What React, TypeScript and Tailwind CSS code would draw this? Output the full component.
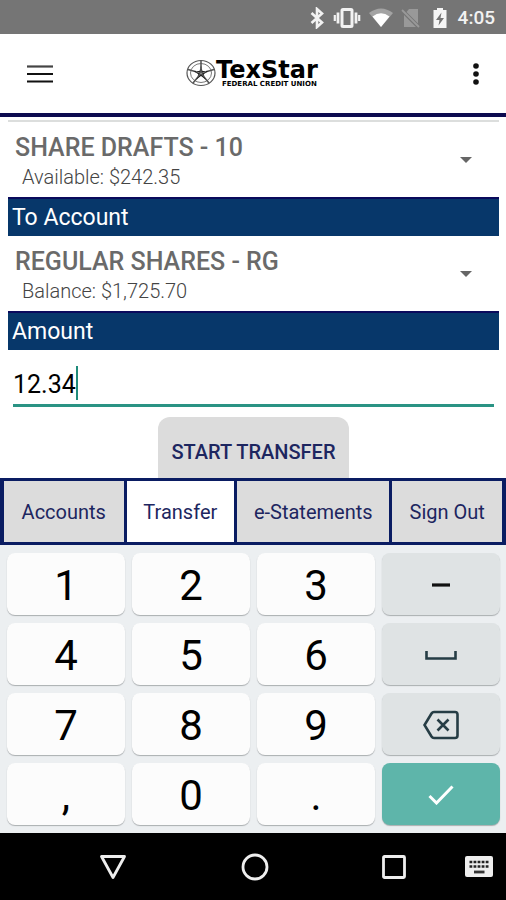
import { useState } from 'react'
import type { ReactNode } from 'react'
import { clsx } from 'clsx'

interface AccountPickerProps {
  id: string
  label: string
  name: string
  detail: string
}

const TABS = [
  { label: 'Accounts', className: 'grow-120' },
  { label: 'Transfer', className: 'grow-108' },
  { label: 'e-Statements', className: 'grow-153' },
  { label: 'Sign Out', className: 'grow-110' },
]

function StatusBar() {
  return (
    <div className="flex h-[34px] items-center justify-end bg-[#757575] pt-px pr-[11px] text-[#f2f2f2]">
      <svg viewBox="0 0 16 22" className="mr-2 h-[22px] w-4" fill="none" stroke="#f2f2f2" strokeWidth="2.6">
        <path d="M2.500 6l10.500 9.500-5 4.500V2l5 4.500L2.500 16" />
      </svg>
      <svg viewBox="0 0 28 22" className="mr-2 h-[22px] w-7" fill="none" stroke="#f2f2f2">
        <rect x="9" y="2.5" width="10" height="17" strokeWidth="3" rx="1" />
        <path d="M5 5.500v11M23 5.500v11" strokeWidth="2.800" />
        <path d="M1.800 8v6M26.200 8v6" strokeWidth="2.200" />
      </svg>
      <svg viewBox="0 0 24 20" className="mr-2 h-5 w-6">
        <path d="M0 5Q12 -4 24 5L12 19z" fill="#a3a3a3" />
        <path d="M3.500 8.500Q12 2 20.500 8.500L12 19z" fill="#fff" />
      </svg>
      <svg viewBox="0 0 20 22" className="mr-[11px] h-[22px] w-5">
        <path d="M8 2h9v14.500L5.500 5zM3 8l12 12H3z" fill="#999" />
        <path d="M1 3l17 17" stroke="#999" strokeWidth="1.8" />
      </svg>
      <svg viewBox="0 0 16 22" className="mr-2.5 h-[22px] w-4">
        <path d="M5 1h6v2h3.500v18h-13V3H5z" fill="#f5f5f5" />
        <path d="M9.500 5.500L4 13h3.500l-1 5.500L12 11H8.500z" fill="#757575" />
      </svg>
      <span className="text-[19px] leading-6 font-medium">4:05</span>
    </div>
  )
}

function Logo() {
  return (
    <svg viewBox="0 0 144 40" className="h-10 w-36" role="img" aria-label="TexStar Federal Credit Union">
      <g fill="none" stroke="#555">
        <ellipse cx="15" cy="19" rx="14" ry="12.500" strokeWidth="1.200" />
        <ellipse cx="15" cy="19" rx="10.500" ry="9.500" strokeWidth=".8" />
        <path d="M15 6.500v9M2 15.500l9 2.500M28 15.500l-9 2.500M7 29l5-6M23 29l-5-6" strokeWidth="1.600" />
      </g>
      <path
        d="M15 12l1.500 5 6 0-4.800 3.200 2 5.300-4.700-3.400-4.700 3.400 2-5.300-4.800-3.200 6 0z"
        fill="#222"
      />
      <path d="M15 13.500v6l4 4M15 19.500l-4 4M15 19.500l5-2M15 19.500l-5-2" stroke="#bbb" strokeWidth=".6" fill="none" />
      <text x="30" y="24" className="font-['DejaVu_Sans',sans-serif] text-2xl font-bold">
        TexStar
      </text>
      <text x="36" y="32" className="font-['DejaVu_Sans',sans-serif] text-[7px] font-bold">
        FEDERAL CREDIT UNION
      </text>
    </svg>
  )
}

function Header() {
  return (
    <header className="flex h-[83px] items-center justify-between border-b-4 border-[#0d0b50] bg-white pr-3.5 pl-6">
      <button aria-label="Menu" className="flex h-8 w-8 items-center justify-center">
        <svg viewBox="0 0 26 20" className="h-5 w-[26px]" stroke="#111" strokeWidth="2.2">
          <path d="M0 2.500h26" stroke="#444" />
          <path d="M0 10h26M0 17.500h26" />
        </svg>
      </button>
      <Logo />
      <button aria-label="More options" className="flex h-8 w-8 items-center justify-center">
        <svg viewBox="0 0 8 24" className="h-6 w-2" fill="#111">
          <circle cx="4" cy="4" r="2.800" />
          <circle cx="4" cy="12" r="2.800" />
          <circle cx="4" cy="20" r="2.800" />
        </svg>
      </button>
    </header>
  )
}

function AccountPicker({ id, label, name, detail }: AccountPickerProps) {
  return (
    <div className="flex h-[75px] items-center justify-between pr-[26px] pl-[7px]">
      <div className="flex grow flex-col gap-0.5 pt-px">
        <select
          id={id}
          aria-label={label}
          className="h-8 w-full appearance-none bg-transparent text-[25px] font-medium text-[#6a6a6a] outline-none"
        >
          <option>{name}</option>
        </select>
        <span className="pl-[7px] text-xl leading-7 font-light text-[#444]">{detail}</span>
      </div>
      <svg viewBox="0 0 14 8" className="h-2 w-[14px]" fill="#666">
        <path d="M1 1h12L7 7z" />
      </svg>
    </div>
  )
}

function Banner({ children }: { children: ReactNode }) {
  return (
    <div className="flex h-[39px] items-center border-t-2 border-[#0a0a5c] bg-[#07376a] px-1 pt-0.5 text-[23px] text-white">
      {children}
    </div>
  )
}

function TabBar() {
  return (
    <nav className="flex h-[67px] gap-[3px] border-x-4 border-y-[3px] border-[#0a1c62] bg-[#0a1c62]">
      {TABS.map((tab) => (
        <button
          key={tab.label}
          className={clsx(
            'basis-0 text-xl text-[#1d2660]',
            tab.className,
            tab.label === 'Transfer' ? 'bg-white' : 'bg-[#dcdcdc]'
          )}
        >
          {tab.label}
        </button>
      ))}
    </nav>
  )
}

interface KeyProps {
  tone?: 'light' | 'grey' | 'teal'
  label?: string
  children: ReactNode
}

function Key({ tone = 'light', label, children }: KeyProps) {
  return (
    <button
      aria-label={label}
      className={clsx(
        'flex h-[62px] items-center justify-center rounded-lg pt-0.5 text-[42px] text-black shadow-[0_1px_1px_#aaaeb0]',
        tone === 'light' && 'bg-[#fcfcfc]',
        tone === 'grey' && 'bg-[#dfe3e4]',
        tone === 'teal' && 'bg-[#5eb5aa]'
      )}
    >
      {children}
    </button>
  )
}

function Keypad() {
  return (
    <div className="grid grid-cols-4 gap-x-[7px] gap-y-2 bg-[#eceff1] py-2 pr-[6px] pl-[7px]">
      <Key>1</Key>
      <Key>2</Key>
      <Key>3</Key>
      <Key tone="grey" label="Minus">
        <svg viewBox="0 0 18 4" className="h-1 w-[18px]">
          <path d="M0 2h18" stroke="#111" strokeWidth="3.200" />
        </svg>
      </Key>
      <Key>4</Key>
      <Key>5</Key>
      <Key>6</Key>
      <Key tone="grey" label="Space">
        <svg viewBox="0 0 32 10" className="h-[10px] w-8" fill="none" stroke="#263d45" strokeWidth="2.600">
          <path d="M1.500 1v7.500h29V1" />
        </svg>
      </Key>
      <Key>7</Key>
      <Key>8</Key>
      <Key>9</Key>
      <Key tone="grey" label="Backspace">
        <svg viewBox="0 0 36 30" className="h-[30px] w-9" fill="none" stroke="#263d45" strokeWidth="2.600">
          <path d="M11 2h21q2.500 0 2.500 2.500v21q0 2.500-2.500 2.500H11q-1.500 0-2.500-1.500L1.500 15l7-11.500Q9.500 2 11 2z" />
          <path d="M14.500 9.500l11 11M25.500 9.500l-11 11" />
        </svg>
      </Key>
      <Key>,</Key>
      <Key>0</Key>
      <Key>.</Key>
      <Key tone="teal" label="Done">
        <svg viewBox="0 0 26 20" className="h-5 w-[26px]" fill="none" stroke="#fff" strokeWidth="3">
          <path d="M1.500 11l7 7L24.500 1.500" />
        </svg>
      </Key>
    </div>
  )
}

function SystemNav() {
  return (
    <div className="flex h-[67px] items-center justify-between bg-black pr-[13px] pl-[99px]">
      <button aria-label="Hide keyboard">
        <svg viewBox="0 0 28 26" className="h-[26px] w-7" fill="none" stroke="#eee" strokeWidth="2.800" strokeLinejoin="round">
          <path d="M2.500 2.500h23L14 23.500z" />
        </svg>
      </button>
      <button aria-label="Home">
        <svg viewBox="0 0 28 28" className="h-7 w-7" fill="none" stroke="#eee" strokeWidth="2.800">
          <circle cx="14" cy="14" r="12" />
        </svg>
      </button>
      <div className="flex items-center gap-[59px]">
        <button aria-label="Recent apps">
          <svg viewBox="0 0 24 24" className="h-6 w-6" fill="none" stroke="#eee" strokeWidth="2.800">
            <rect x="1.500" y="1.500" width="21" height="21" rx="1" />
          </svg>
        </button>
        <button aria-label="Switch keyboard">
          <svg viewBox="0 0 28 21" className="h-[21px] w-7">
            <rect width="28" height="21" rx="2" fill="#eee" />
            <path d="M4.500 6h19M4.500 10.500h19" stroke="#222" strokeWidth="2.500" strokeDasharray="2.800 1.250" />
            <path d="M9 16h10.500" stroke="#333" strokeWidth="2.800" />
          </svg>
        </button>
      </div>
    </div>
  )
}

export default function App() {
  const [amount, setAmount] = useState('12.34')

  return (
    <div className="flex min-h-screen flex-col bg-white font-[Roboto,sans-serif]">
      <StatusBar />
      <Header />
      <main className="flex grow flex-col pt-[3px] pr-[7px] pl-2">
        <div className="h-[2px] bg-[#dcdedd]" />
        <AccountPicker id="from" label="From Account" name="SHARE DRAFTS - 10" detail="Available: $242.35" />
        <Banner>To Account</Banner>
        <AccountPicker id="to" label="To Account" name="REGULAR SHARES - RG" detail="Balance: $1,725.70" />
        <Banner>
          <label htmlFor="amount">Amount</label>
        </Banner>
        <div className="mx-[5px] mt-4 flex h-[41px] items-start border-b-[3px] border-[#2a9384]">
          <input
            id="amount"
            inputMode="decimal"
            value={amount}
            onChange={(e) => setAmount(e.target.value)}
            className="h-9 w-[63px] pt-0.5 text-[25px] text-black outline-none"
          />
          <span className="h-[34px] w-[2px] bg-[#1f8b7b]" />
        </div>
        <button className="mt-[10px] min-h-[61px] w-[191px] grow self-center rounded-t-xl bg-[#dcdcdc] pt-2 text-xl font-medium text-[#1d2660]">
          START TRANSFER
        </button>
      </main>
      <TabBar />
      <Keypad />
      <SystemNav />
    </div>
  )
}
